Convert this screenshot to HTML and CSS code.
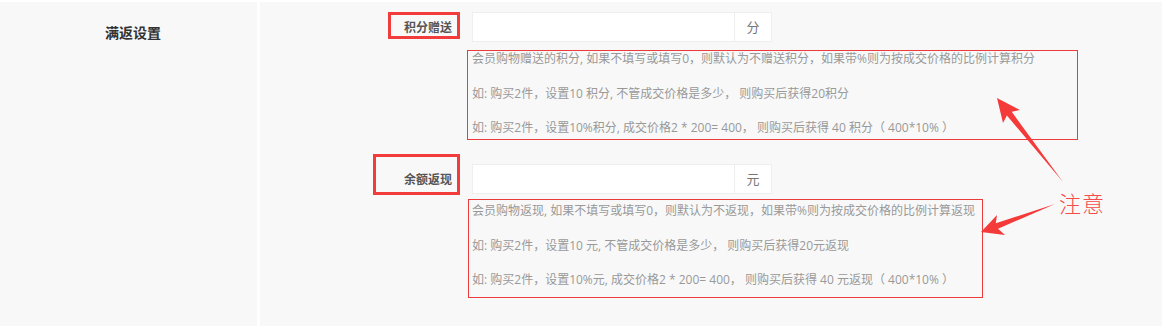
FILE: index.html
```html
<!DOCTYPE html>
<html lang="zh-CN">
<head>
<meta charset="utf-8">
<title>满返设置</title>
<link rel="stylesheet" href="styles.css">
</head>
<body>
<div class="page">
  <aside class="side">
    <h3 class="side-title">满返设置</h3>
  </aside>
  <main class="panel">
    <div class="field">
      <label class="field-label">积分赠送</label>
      <div class="field-body">
        <div class="input-group">
          <input class="input" type="text">
          <span class="addon">分</span>
        </div>
        <div class="help">
          <p>会员购物赠送的积分, 如果不填写或填写0，则默认为不赠送积分，如果带%则为按成交价格的比例计算积分</p>
          <p>如: 购买2件，设置10 积分, 不管成交价格是多少， 则购买后获得20积分</p>
          <p>如: 购买2件，设置10%积分, 成交价格2 * 200= 400， 则购买后获得 40 积分（ 400*10% ）</p>
        </div>
      </div>
    </div>
    <div class="field">
      <label class="field-label">余额返现</label>
      <div class="field-body">
        <div class="input-group">
          <input class="input" type="text">
          <span class="addon">元</span>
        </div>
        <div class="help">
          <p>会员购物返现, 如果不填写或填写0，则默认为不返现，如果带%则为按成交价格的比例计算返现</p>
          <p>如: 购买2件，设置10 元, 不管成交价格是多少， 则购买后获得20元返现</p>
          <p>如: 购买2件，设置10%元, 成交价格2 * 200= 400， 则购买后获得 40 元返现（ 400*10% ）</p>
        </div>
      </div>
    </div>

    <div class="mark mark-label mark-label-a"></div>
    <div class="mark mark-label mark-label-b"></div>
    <div class="mark mark-help mark-help-a"></div>
    <div class="mark mark-help mark-help-b"></div>
    <svg class="mark-arrows" viewBox="960 80 160 160" width="160" height="160" aria-hidden="true">
      <polygon points="997,98 1020,110 1011.7,111.8 1063,182 1006.9,115.6 1003,123" fill="#f53a3a"/>
      <polygon points="981,232 997,215 995.8,223.2 1055,204 998,228.8 1005,235" fill="#f53a3a"/>
    </svg>
    <span class="mark-note">注意</span>
  </main>
</div>
</body>
</html>
```

FILE: styles.css
```css
* { box-sizing: border-box; }

html, body {
  margin: 0;
  padding: 0;
  background: #ffffff;
}

body {
  font-family: "Noto Sans CJK SC", "Liberation Sans", sans-serif;
  font-size: 13px;
  color: #555;
}

.page {
  display: flex;
  gap: 3px;
  padding-top: 2px;
  min-height: 100vh;
}

.side {
  width: 257px;
  flex: none;
  background: #f8f8f8;
}

.side-title {
  margin: 0;
  padding: 21px 0 0 9px;
  font-size: 14px;
  line-height: 18px;
  font-weight: 700;
  color: #333;
  text-align: center;
}

.panel {
  flex: 1;
  position: relative;
  background: #f8f8f8;
  padding-top: 10px;
  display: flex;
  flex-direction: column;
  gap: 27px;
}

.field {
  display: grid;
  grid-template-columns: 200px 1fr;
  column-gap: 12px;
}

.field-label {
  text-align: right;
  padding-right: 8px;
  font-size: 12px;
  font-weight: 700;
  color: #555;
  line-height: 30px;
  height: 30px;
}

.input-group {
  display: flex;
  width: 300px;
  height: 30px;
  border: 1px solid #eeeeee;
  background: #fff;
}

.input {
  flex: 1;
  min-width: 0;
  border: 0;
  outline: none;
  padding: 0 8px;
  background: #fff;
  font: inherit;
}

.addon {
  width: 37px;
  flex: none;
  border-left: 1px solid #eeeeee;
  text-align: center;
  line-height: 28px;
  color: #777;
  font-size: 13px;
}

.help {
  margin-top: 8px;
  display: flex;
  flex-direction: column;
  gap: 16.5px;
  color: #999;
  font-family: "Open Sans", "Noto Sans CJK SC", sans-serif;
  font-size: 12px;
}

.help p {
  margin: 0;
  line-height: 18px;
  white-space: pre;
}

/* annotation overlays */
.mark {
  position: absolute;
  pointer-events: none;
}

.mark-label {
  border: 3px solid #f23c3c;
}

.mark-label-a { left: 128px; top: 10px; width: 72px; height: 27px; }
.mark-label-b { left: 113px; top: 152px; width: 87px; height: 41px; }

.mark-help {
  border: 1px solid #ec3b3b;
}

.mark-help-a { left: 207px; top: 48px; width: 611px; height: 90px; }
.mark-help-b { left: 208px; top: 197px; width: 515px; height: 99px; }

.mark-arrows {
  position: absolute;
  left: 700px;
  top: 78px;
  pointer-events: none;
}

.mark-note {
  position: absolute;
  left: 799px;
  top: 187px;
  font-size: 22px;
  line-height: 26px;
  font-weight: 300;
  color: #f54b4b;
  letter-spacing: 1px;
}
```
